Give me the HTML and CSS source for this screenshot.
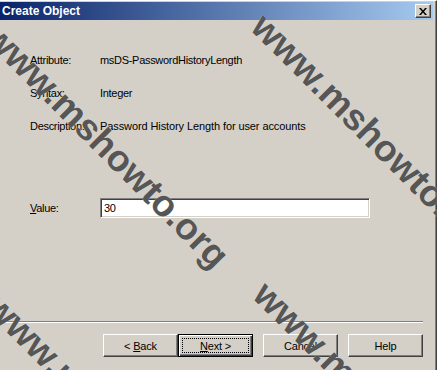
FILE: index.html
```html
<!doctype html>
<html lang="en">
  <head>
    <meta charset="UTF-8" />
    <title>Create Object</title>
    <link rel="stylesheet" href="styles.css">
  </head>
  <body>
    <div class="window">
      <div class="titlebar">
        <span class="title">Create Object</span>
        <button class="close-btn" aria-label="Close">
          <svg width="8" height="7" viewBox="0 0 8 7"><path d="M0 0h2l2 2.5L6 0h2L5 3.5 8 7H6L4 4.5 2 7H0l3-3.5z" fill="#000"/></svg>
        </button>
      </div>

      <div class="dialog">
        <div class="fields">
          <div class="label">Attribute:</div>
          <div class="value">msDS-PasswordHistoryLength</div>
          <div class="label">Syntax:</div>
          <div class="value">Integer</div>
          <div class="label">Description:</div>
          <div class="value desc">Password History Length for user accounts</div>
        </div>

        <div class="value-row">
          <label class="label" for="attr-value"><u>V</u>alue:</label>
          <input id="attr-value" class="text-input" type="text" value="30" />
        </div>

        <div class="separator"></div>

        <div class="btn-row">
          <button class="btn">&lt; <u>B</u>ack</button>
          <button class="btn btn-default"><span class="focus"><u>N</u>ext &gt;</span></button>
          <button class="btn btn-gap">Cancel</button>
          <button class="btn btn-gap">Help</button>
        </div>
      </div>
    </div>

    <!-- watermark overlay -->
    <div class="watermarks">
      <span class="wm wm-1">www.mshowto.org</span>
      <span class="wm wm-2">www.mshowto.org</span>
      <span class="wm wm-3">www.mshowto.org</span>
      <span class="wm wm-4">www.mshowto.org</span>
    </div>
  </body>
</html>
```

FILE: styles.css
```css
body {
  margin: 0;
  width: 437px;
  height: 370px;
  overflow: hidden;
  position: relative;
  background: #d4d0c8;
  font-family: 'Liberation Sans', Arial, sans-serif;
  font-size: 11px;
  color: #000;
}
.window {
  height: 370px;
  box-sizing: border-box;
  padding-top: 2px;
  padding-right: 3px;
  border-top: 1px solid #fff;
  border-right: 1px solid #404040;
  box-shadow: inset -1px 0 #808080;
  display: flex;
  flex-direction: column;
}
.titlebar {
  height: 18px;
  margin-top: -1px;
  display: flex;
  align-items: center;
  justify-content: space-between;
  background: linear-gradient(to right, #0a246a, #a6caf0);
}
.title {
  padding-left: 2px;
  color: #fff;
  font-weight: bold;
  font-size: 12px;
}
.close-btn {
  width: 16px;
  height: 14px;
  margin-right: 2px;
  padding: 0;
  display: flex;
  align-items: center;
  justify-content: center;
  background: #d4d0c8;
  border: 1px solid;
  border-color: #fff #404040 #404040 #fff;
  box-shadow: inset -1px -1px #808080;
}
.dialog {
  flex: 1;
  padding-top: 34px;
  display: flex;
  flex-direction: column;
}
.fields {
  display: grid;
  grid-template-columns: 70px 1fr;
  row-gap: 20px;
  padding-left: 30px;
  line-height: 13px;
  letter-spacing: -0.3px;
}
.desc {
  letter-spacing: -0.1px;
}
.value-row {
  display: flex;
  align-items: center;
  margin-top: 65px;
  padding-left: 30px;
  letter-spacing: -0.3px;
}
.value-row .label {
  width: 70px;
}
.text-input {
  width: 270px;
  height: 20px;
  box-sizing: border-box;
  margin: 0;
  padding: 0 3px;
  font: inherit;
  letter-spacing: -0.3px;
  background: #fff;
  border: 1px solid;
  border-color: #808080 #fff #fff #808080;
  box-shadow: inset 1px 1px #404040, inset -1px -1px #d4d0c8;
  outline: none;
}
.separator {
  margin-top: 103px;
  margin-right: 10px;
  height: 1px;
  background: #808080;
  border-bottom: 1px solid #fff;
}
.btn-row {
  display: flex;
  justify-content: flex-end;
  margin-top: 11px;
  padding-right: 10px;
}
.btn {
  width: 75px;
  height: 23px;
  padding: 0;
  font: inherit;
  font-size: 11px;
  letter-spacing: -0.2px;
  color: #000;
  background: #d4d0c8;
  border: 1px solid;
  border-color: #fff #404040 #404040 #fff;
  box-shadow: inset -1px -1px #808080;
}
.btn-gap {
  margin-left: 10px;
}
.btn-default {
  border: 1px solid #000;
  box-shadow: inset 1px 1px #fff, inset -1px -1px #404040, inset -2px -2px #808080;
  display: flex;
  align-items: stretch;
  padding: 3px;
}
.btn-default .focus {
  flex: 1;
  display: flex;
  align-items: center;
  justify-content: center;
  border: 1px dotted #000;
}
.watermarks {
  position: absolute;
  inset: 0;
  pointer-events: none;
}
.wm {
  position: absolute;
  font-family: 'Liberation Sans', Arial, sans-serif;
  font-weight: bold;
  font-size: 37px;
  line-height: 1;
  white-space: nowrap;
  color: #565656;
  text-shadow: 0 0 1px rgba(255, 255, 255, 0.6);
  transform-origin: 0 0;
  transform: rotate(45deg);
}
.wm-1 { left: 4px; top: 17px; }
.wm-2 { left: 271px; top: 7px; }
.wm-3 { left: 5px; top: 287px; }
.wm-4 { left: 273px; top: 275px; }
```
